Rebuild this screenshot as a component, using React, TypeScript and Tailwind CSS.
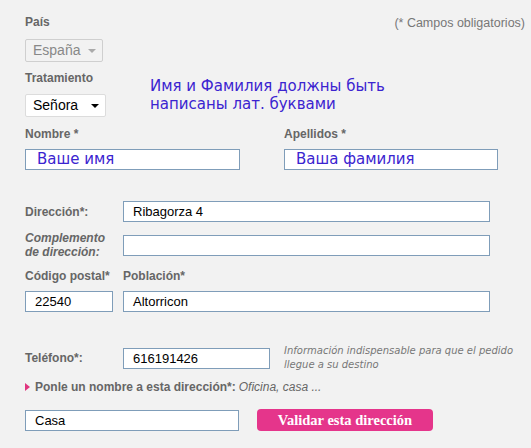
import React from 'react'

const label = 'text-[12px] leading-[14px] font-bold text-[#666]'
const field = 'h-[21px] border border-[#7f9db9] bg-white text-[13px] leading-[19px] text-black pl-[9px]'
const ru = { fontFamily: '"DejaVu Sans", sans-serif' }

const Arrow: React.FC<{ color: string }> = ({ color }) => (
  <svg width="8" height="4" viewBox="0 0 8 4" className="shrink-0">
    <path d="M0 0h8L4 4z" fill={color} />
  </svg>
)

const App: React.FC = () => {
  return (
    <div
      className="w-[531px] h-[448px] bg-[#f2f2f2] pl-[25px] pt-[15px] overflow-hidden"
      style={{ fontFamily: '"Liberation Sans", Arial, sans-serif' }}
    >
      {/* País */}
      <div className="flex justify-between items-start h-[14px] pr-[6px]">
        <span className={label}>País</span>
        <span className="text-[12.5px] leading-[14px] text-[#777] mt-[1px]">(* Campos obligatorios)</span>
      </div>
      <div className="mt-[10px] w-[78px] h-[23px] border border-[#cfcfcf] rounded-[2px] flex items-center justify-between pl-[7px] pr-[6px] text-[14px] text-[#888]">
        <span>España</span>
        <Arrow color="#aaa" />
      </div>

      {/* Tratamiento */}
      <div className="flex mt-[9px]">
        <div className="w-[125px]">
          <div className={label}>Tratamiento</div>
          <div className="mt-[9px] w-[81px] h-[23px] border border-[#dcdcdc] bg-white rounded-[2px] flex items-center justify-between pl-[7px] pr-[6px] text-[14px] text-black">
            <span>Señora</span>
            <Arrow color="#000" />
          </div>
        </div>
        <div className="mt-[6px] text-[15px] leading-[18px] text-[#3b24d0]" style={ru}>
          Имя и Фамилия должны быть
          <br />
          написаны лат. буквами
        </div>
      </div>

      {/* Nombre / Apellidos */}
      <div className="grid grid-cols-[259px_214px] mt-[10px]">
        <div>
          <div className={label}>Nombre *</div>
          <div className={`${field} mt-[8px] w-[215px] !pl-[11px] !text-[15px] !text-[#3b24d0]`} style={ru}>
            Ваше имя
          </div>
        </div>
        <div>
          <div className={label}>Apellidos *</div>
          <div className={`${field} mt-[8px] w-[214px] !pl-[11px] !text-[15px] !text-[#3b24d0]`} style={ru}>
            Ваша фамилия
          </div>
        </div>
      </div>

      {/* Dirección */}
      <div className="flex items-center mt-[31px]">
        <div className={`${label} w-[98px]`}>Dirección*:</div>
        <div className={`${field} w-[367px]`}>Ribagorza 4</div>
      </div>
      <div className="flex items-center mt-[9px]">
        <div className={`${label} w-[98px] italic`}>
          Complemento
          <br />
          de dirección:
        </div>
        <div className={`${field} w-[367px]`}></div>
      </div>

      {/* Código postal / Población */}
      <div className="flex mt-[10px]">
        <div className={`${label} w-[98px]`}>Código postal*</div>
        <div className={label}>Población*</div>
      </div>
      <div className="flex mt-[8px]">
        <div className={`${field} w-[88px]`}>22540</div>
        <div className={`${field} w-[367px] ml-[10px]`}>Altorricon</div>
      </div>

      {/* Teléfono */}
      <div className="flex items-start mt-[32px]">
        <div className={`${label} w-[98px] mt-[7px]`}>Teléfono*:</div>
        <div className={`${field} w-[147px] mt-[4px]`}>616191426</div>
        <div className="ml-[14px] text-[10px] leading-[14px] italic text-[#777]" style={ru}>
          Información indispensable para que el pedido
          <br />
          llegue a su destino
        </div>
      </div>

      {/* Nombre de dirección */}
      <div className="flex items-center mt-[8px] text-[12px] leading-[14px] text-[#666]">
        <svg width="5" height="8" viewBox="0 0 5 8" className="mr-[5px]">
          <path d="M0 0l5 4-5 4z" fill="#e0367f" />
        </svg>
        <span className="font-bold">Ponle un nombre a esta dirección*:</span>
        <span className="italic ml-[3px]">Oficina, casa ...</span>
      </div>
      <div className="flex items-center mt-[15px]">
        <div className={`${field} w-[214px]`}>Casa</div>
        <button
          className="ml-[18px] w-[176px] h-[22px] rounded-[4px] bg-[#e5358b] text-white text-[14.5px] leading-[22px] font-bold"
          style={{ fontFamily: '"Liberation Serif", "Times New Roman", serif' }}
        >
          Validar esta dirección
        </button>
      </div>
    </div>
  )
}

export default App
